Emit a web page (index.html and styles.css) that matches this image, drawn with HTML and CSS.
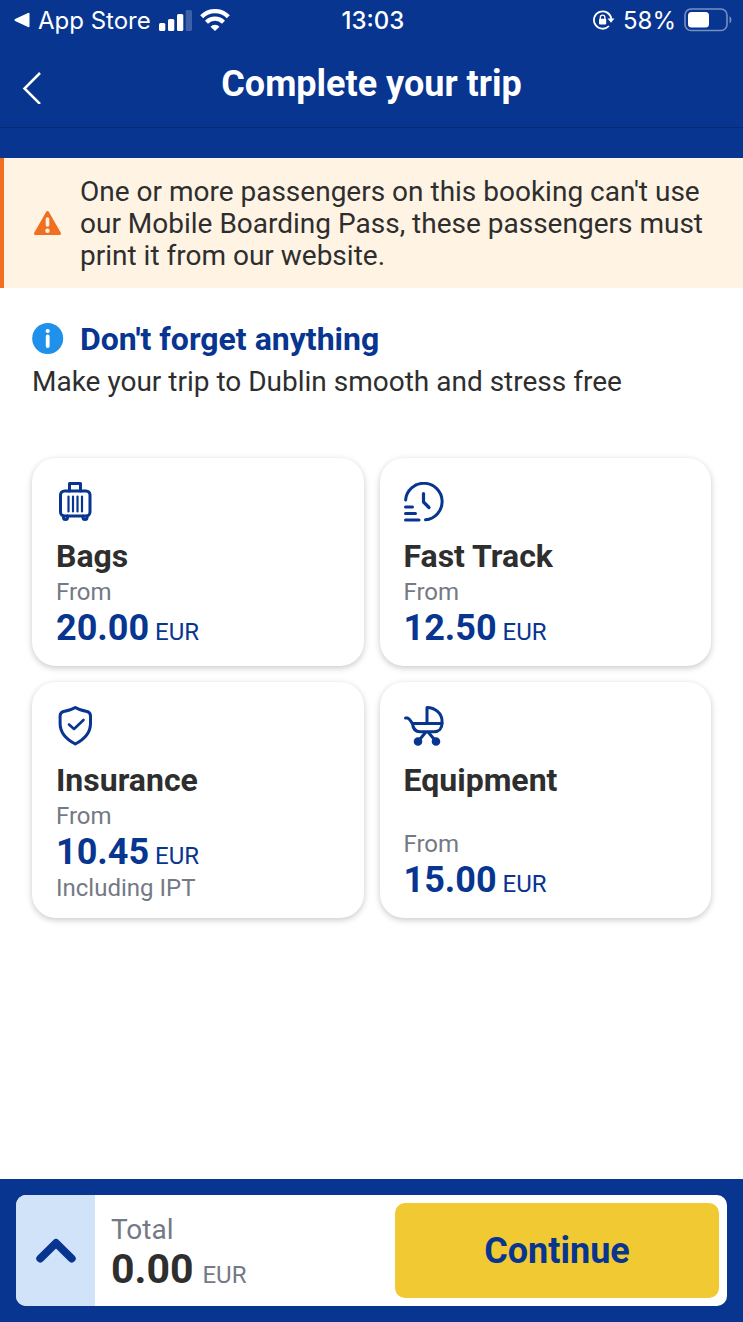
FILE: index.html
```html
<!DOCTYPE html>
<html lang="en">
<head>
  <meta charset="UTF-8">
  <title>Complete your trip</title>
  <meta name="viewport" content="width=device-width, initial-scale=1.0">
  <link rel="stylesheet" href="styles.css">
</head>
<body>
  <header class="header">
    <div class="status-bar">
      <div class="status-left">
        <a class="app-link" href="#">
          <svg width="16" height="16" viewBox="0 0 16 16"><path d="M1.500 8 L14.500 1.800 V14.200 Z" fill="#fff" stroke="#fff" stroke-width="2" stroke-linejoin="round"/></svg>
          <span>App Store</span>
        </a>
        <svg width="33" height="22" viewBox="0 0 33 22" fill="#fff">
          <rect x="0" y="14" width="6.300" height="8" rx="1.5"/>
          <rect x="9" y="10" width="6.300" height="12" rx="1.5"/>
          <rect x="18" y="5" width="6.300" height="17" rx="1.5"/>
          <rect x="26.700" y="1" width="6.300" height="21" rx="1.5" opacity="0.22"/>
        </svg>
        <svg width="30" height="22" viewBox="0 0 30 22" fill="none" stroke="#fff" stroke-width="4.200">
          <path d="M1.700 7.700 A18.500 18.500 0 0 1 28.300 7.700"/>
          <path d="M6.500 13.200 A12 12 0 0 1 23.500 13.200"/>
          <path d="M15 22 L10.500 17.700 A6.200 6.200 0 0 1 19.500 17.700 Z" fill="#fff" stroke="none"/>
        </svg>
      </div>
      <time class="clock">13:03</time>
      <div class="status-right">
        <svg width="22" height="20" viewBox="0 0 22 20" fill="none" stroke="#fff" stroke-width="1.8">
          <path d="M16 16 A8.700 8.700 0 1 1 18.300 9"/>
          <path d="M14.500 8.500 H21.500 L18 12.800 Z" fill="#fff" stroke="none"/>
          <path d="M7.300 9 V7.500 A2.300 2.300 0 0 1 11.900 7.500 V9" stroke-width="1.3"/>
          <rect x="6" y="8.800" width="7.200" height="5.600" rx="0.800" fill="#fff" stroke="none"/>
        </svg>
        <span>58%</span>
        <svg width="48" height="24" viewBox="0 0 48 24" fill="none">
          <rect x="1" y="1" width="42" height="21.500" rx="6" stroke="#fff" stroke-width="1.600" opacity="0.45"/>
          <rect x="4" y="4" width="21" height="15.500" rx="3.500" fill="#fff"/>
          <path d="M45.500 8 Q47.500 9.500 47.500 11.700 T45.500 15.500 Z" fill="#fff" opacity="0.45"/>
        </svg>
      </div>
    </div>
    <div class="nav">
      <button class="back" type="button" aria-label="Back">
        <svg width="20" height="40" viewBox="0 0 20 40"><path d="M18 9 L2.500 24.500 L18 40" fill="none" stroke="#fff" stroke-width="2.500"/></svg>
      </button>
      <h1>Complete your trip</h1>
    </div>
  </header>

  <div class="alert" role="alert">
    <svg width="32" height="32" viewBox="0 0 32 32">
      <path d="M15.500 4.500 L27.500 25.500 H3.500 Z" fill="#f06f21" stroke="#f06f21" stroke-width="3" stroke-linejoin="round"/>
      <path d="M15.500 11 V17" stroke="#fff4e4" stroke-width="3.600" stroke-linecap="round"/>
      <circle cx="15.500" cy="22.800" r="2.200" fill="#fff4e4"/>
    </svg>
    <p>One or more passengers on this booking can't use our Mobile Boarding Pass, these passengers must print it from our website.</p>
  </div>

  <main class="content">
    <div class="heading">
      <svg width="32" height="32" viewBox="0 0 32 32">
        <circle cx="15.700" cy="15.500" r="15.500" fill="#2091eb"/>
        <circle cx="15.700" cy="8" r="2.100" fill="#fff"/>
        <path d="M15.700 13.500 V23" stroke="#fff" stroke-width="3.800" stroke-linecap="round"/>
      </svg>
      <h2>Don't forget anything</h2>
    </div>
    <p class="subtitle">Make your trip to Dublin smooth and stress free</p>

    <div class="cards">
      <button class="card" type="button">
        <svg class="icon" viewBox="0 0 40 40">
          <rect x="4.500" y="9" width="29.500" height="25" rx="4"/>
          <path d="M13.500 9 V1.500 H24.500 V9"/>
          <path d="M12.500 14.500 V29.500 M17 14.500 V29.500 M21.500 14.500 V29.500 M26 14.500 V29.500" stroke-width="2.200"/>
          <path d="M7.500 34 V35.500 A2 2 0 0 0 11.500 35.500 V34 M27 34 V35.500 A2 2 0 0 0 31 35.500 V34"/>
        </svg>
        <span class="title">Bags</span>
        <span class="note">From</span>
        <span class="price"><b>20.00</b> EUR</span>
      </button>
      <button class="card" type="button">
        <svg class="icon" viewBox="0 0 40 40">
          <path d="M1.600 18 A18.300 18.300 0 1 1 21.500 37.800"/>
          <path d="M19.500 11.500 V20 L25 25.500" stroke-width="3.200"/>
          <path d="M1.500 25 H8.500 M1.500 31.500 H11.500 M1.500 38 H15"/>
        </svg>
        <span class="title">Fast Track</span>
        <span class="note">From</span>
        <span class="price"><b>12.50</b> EUR</span>
      </button>
      <button class="card" type="button">
        <svg class="icon" viewBox="0 0 40 40">
          <path d="M19.300 1.500 C23 3.800 27 4.800 31 5.500 Q34.500 6.500 34.500 10 V17.500 C34.500 27.500 28 33.500 19.300 38 C10.600 33.500 4.100 27.500 4.100 17.500 V10 Q4.100 6.500 7.600 5.500 C11.600 4.800 15.600 3.800 19.300 1.500 Z"/>
          <path d="M13 18.500 L18 23 L27.500 14" stroke-width="2.600"/>
        </svg>
        <span class="title">Insurance</span>
        <span class="note">From</span>
        <span class="price"><b>10.45</b> EUR</span>
        <span class="note">Including IPT</span>
      </button>
      <button class="card" type="button">
        <svg class="icon" viewBox="0 0 40 40">
          <path d="M1.500 12 H3.500 C6 12.500 6.500 15.500 8.500 17.500 H38 V15 C38 7.500 31 1.500 23 1.500 V17.500"/>
          <path d="M8.500 17.500 C9 23 11.500 25.800 16 25.800 H30 C35 25.800 38 22.500 38 17.500"/>
          <path d="M21.500 26.500 L14 35.500 M24.500 26.500 L32 35.500"/>
          <circle cx="14" cy="35.500" r="2.800" fill="#073590"/>
          <circle cx="32" cy="35.500" r="2.800" fill="#073590"/>
        </svg>
        <span class="title">Equipment</span>
        <span class="note push">From</span>
        <span class="price"><b>15.00</b> EUR</span>
      </button>
    </div>
  </main>

  <footer class="footer">
    <div class="basket">
      <button class="toggle" type="button" aria-label="Show price details">
        <svg width="40" height="26" viewBox="0 0 40 26"><path d="M4.300 20.500 L20 5 L35.700 20.500" fill="none" stroke="#073590" stroke-width="8" stroke-linecap="round" stroke-linejoin="round"/></svg>
      </button>
      <div class="total">
        <span class="total-label">Total</span>
        <span class="total-price"><b>0.00</b> EUR</span>
      </div>
      <button class="continue" type="button">Continue</button>
    </div>
  </footer>
</body>
</html>
```
FILE: styles.css
```css
* {
  box-sizing: border-box;
}
body {
  margin: 0;
  min-height: 100vh;
  display: flex;
  flex-direction: column;
  background-color: #fff;
  color: #2e2e2e;
  font-family: Roboto, "Liberation Sans", sans-serif;
}
h1, h2, p {
  margin: 0;
}
button {
  font-family: inherit;
  border: none;
  padding: 0;
  cursor: pointer;
}
svg {
  display: block;
  flex-shrink: 0;
}

/* header */
.header {
  background-color: #073590;
  color: #fff;
  padding-bottom: 30px;
}
.status-bar {
  display: grid;
  grid-template-columns: 1fr auto 1fr;
  align-items: center;
  height: 40px;
  padding: 0 11px 0 14px;
  font-family: Inter, sans-serif;
  font-size: 24px;
}
.status-left, .status-right, .app-link {
  display: flex;
  align-items: center;
  gap: 8px;
}
.status-right {
  justify-content: flex-end;
}
.app-link {
  color: #fff;
  text-decoration: none;
}
.clock {
  font-weight: 500;
}
.nav {
  display: grid;
  grid-template-columns: 64px 1fr 64px;
  align-items: center;
  height: 88px;
  border-bottom: 1px solid #052a70;
}
.back {
  height: 64px;
  padding-left: 22px;
  background: none;
}
.nav h1 {
  font-size: 36px;
  line-height: 44px;
  text-align: center;
}

/* warning */
.alert {
  display: flex;
  align-items: center;
  gap: 16px;
  padding: 18px 32px 16px 28px;
  border-left: 4px solid #f06f21;
  background-color: #fff4e4;
  font-size: 28px;
  line-height: 32px;
}

/* content */
.content {
  flex: 1;
  padding: 32px;
}
.heading {
  display: flex;
  align-items: center;
  gap: 16px;
}
.heading h2 {
  color: #073590;
  font-size: 32px;
  line-height: 38px;
}
.subtitle {
  margin-top: 4px;
  font-size: 28px;
  line-height: 40px;
}
.cards {
  display: grid;
  grid-template-columns: 1fr 1fr;
  gap: 16px;
  margin-top: 56px;
}
.card {
  display: flex;
  flex-direction: column;
  align-items: flex-start;
  padding: 24px 24px 16px;
  border-radius: 24px;
  background-color: #fff;
  box-shadow: 0 2px 6px rgba(0,0,0,0.22);
  text-align: left;
}
.icon {
  width: 40px;
  height: 40px;
  margin-bottom: 16px;
  fill: none;
  stroke: #073590;
  stroke-width: 3;
  stroke-linecap: round;
  stroke-linejoin: round;
}
.title {
  margin-bottom: 4px;
  color: #2e2e2e;
  font-size: 32px;
  font-weight: bold;
  line-height: 36px;
}
.note {
  color: #747985;
  font-size: 24px;
  line-height: 28px;
}
.push {
  margin-top: auto;
}
.price {
  color: #073590;
  font-size: 24px;
  line-height: 28px;
}
.price b {
  font-size: 36px;
  line-height: 44px;
}

/* basket */
.footer {
  position: sticky;
  bottom: 0;
  padding: 16px;
  background-color: #073590;
}
.basket {
  display: flex;
  overflow: hidden;
  border-radius: 10px;
  background-color: #fff;
}
.toggle {
  display: flex;
  align-items: center;
  justify-content: center;
  width: 79px;
  background-color: #d1e3f9;
}
.total {
  flex: 1;
  display: flex;
  flex-direction: column;
  justify-content: center;
  padding: 4px 0 0 16px;
  color: #747985;
}
.total-label {
  font-size: 28px;
  line-height: 32px;
}
.total-price {
  font-size: 24px;
  line-height: 28px;
}
.total-price b {
  margin-right: 3px;
  color: #2e2e2e;
  font-size: 41px;
  line-height: 46px;
}
.continue {
  flex: 0 1 324px;
  height: 95px;
  margin: 8px;
  border-radius: 10px;
  background-color: #f1c933;
  color: #073590;
  font-size: 36px;
  font-weight: bold;
}
```
